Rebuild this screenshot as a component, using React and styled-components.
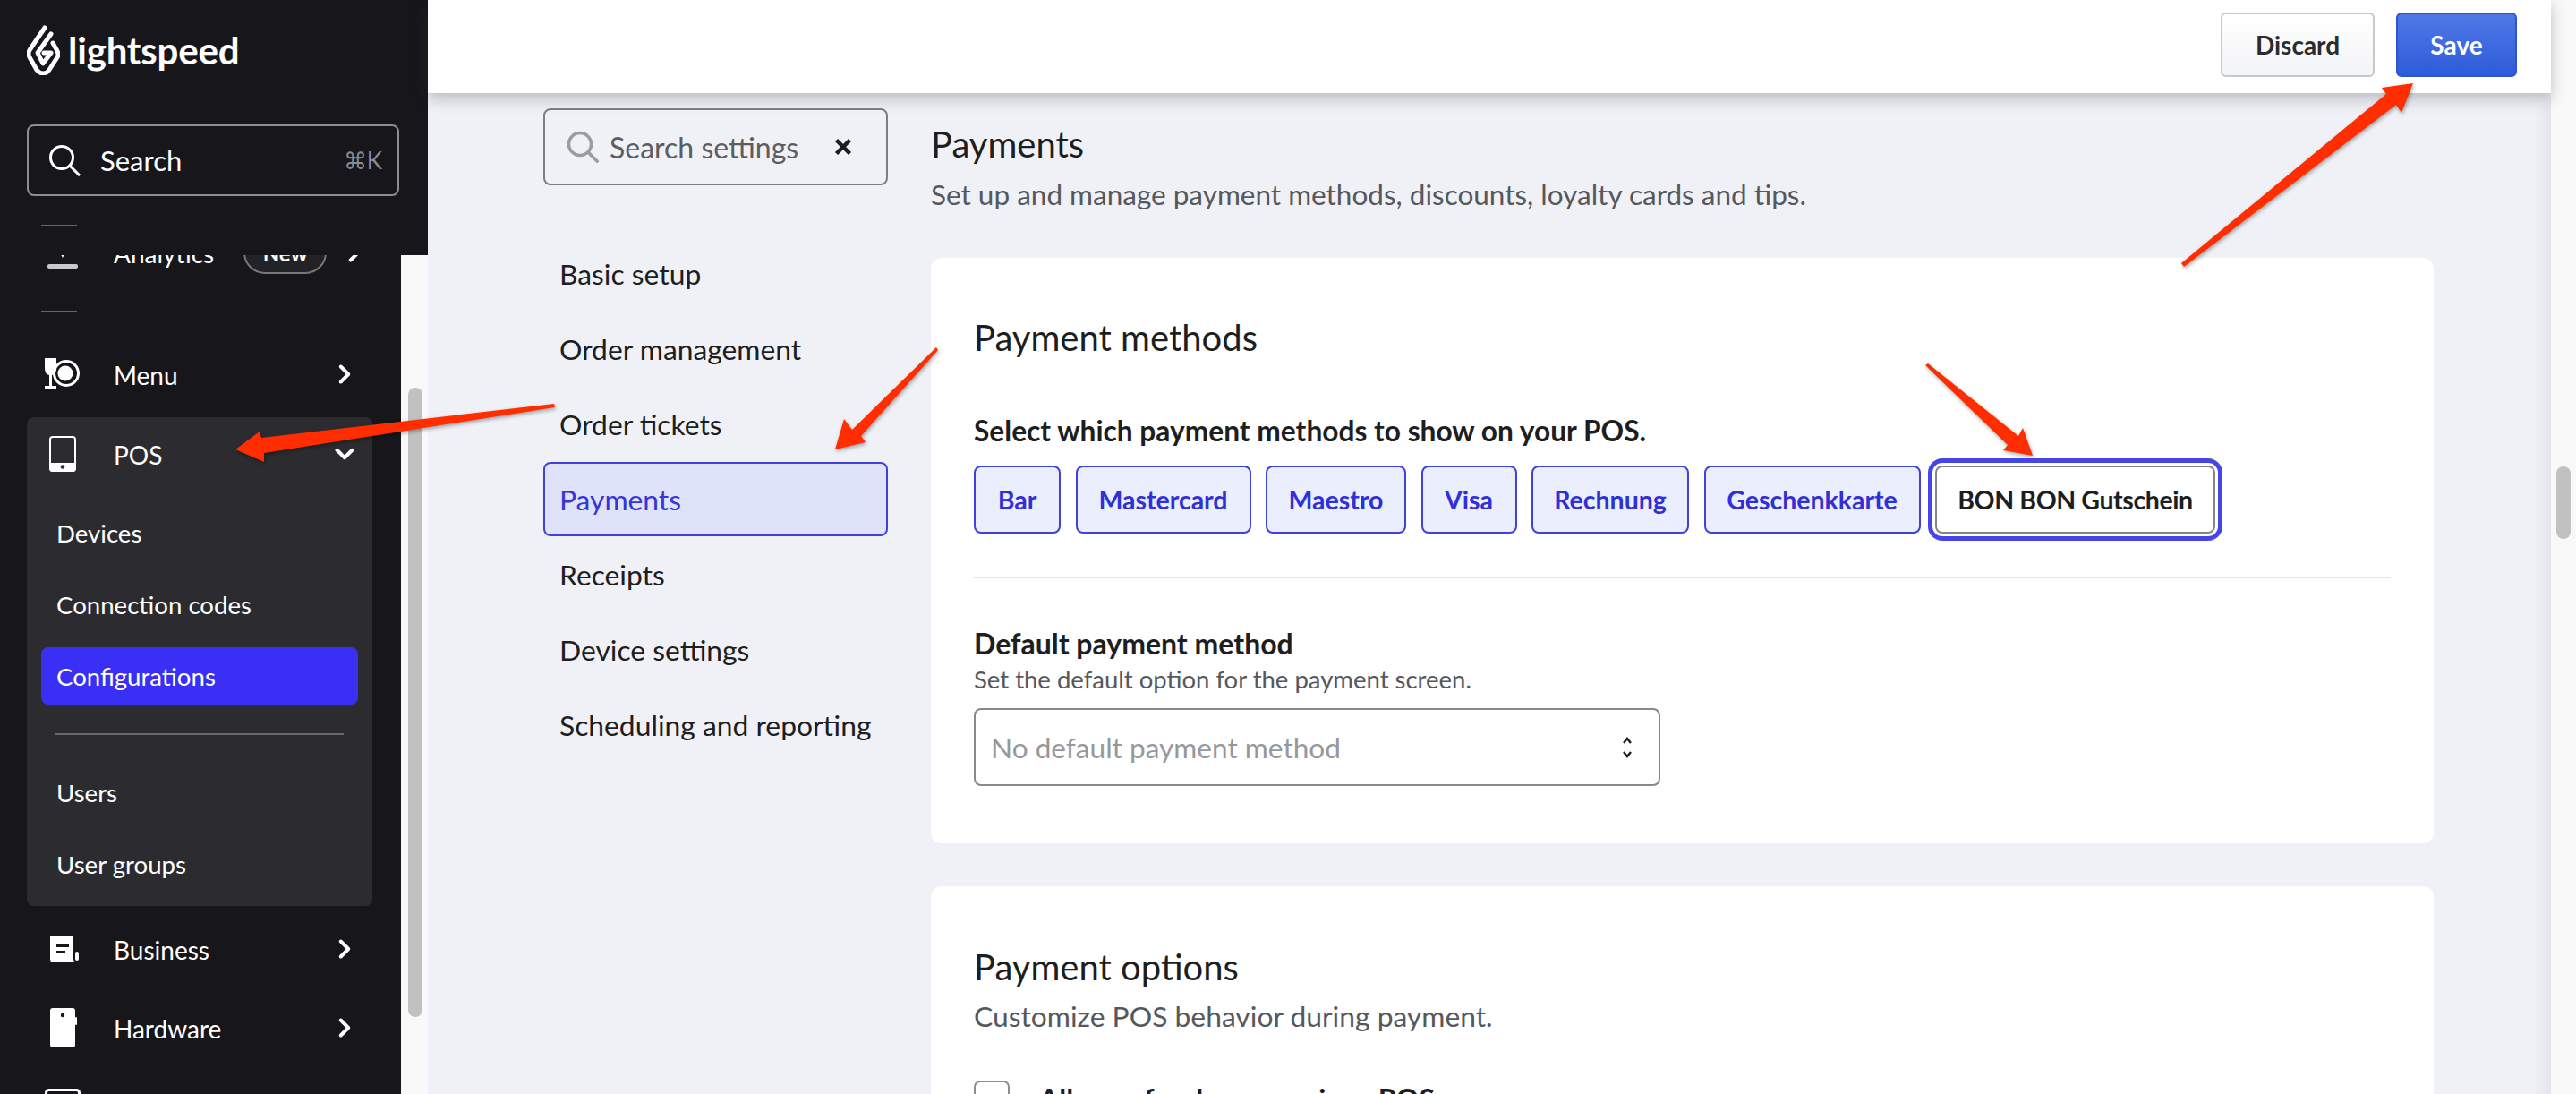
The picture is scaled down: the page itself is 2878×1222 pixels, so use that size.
import React from "react";
import styled, { createGlobalStyle } from "styled-components";
import { ChevronRight, ChevronDown } from "lucide-react";

const GlobalStyle = createGlobalStyle`
  html, body {
    margin: 0;
    width: 2878px;
    height: 1222px;
    overflow: hidden;
    background: #f0f1f6;
    font-family: "Lato", "Liberation Sans", sans-serif;
  }
  * {
    box-sizing: border-box;
  }
`;

const methods = [
  { name: "Bar", width: 97 },
  { name: "Mastercard", width: 196 },
  { name: "Maestro", width: 157 },
  { name: "Visa", width: 107 },
  { name: "Rechnung", width: 176 },
  { name: "Geschenkkarte", width: 242 },
];
const settingsLinks = [
  "Basic setup",
  "Order management",
  "Order tickets",
  "Payments",
  "Receipts",
  "Device settings",
  "Scheduling and reporting",
];

function Flame() {
  return (
    <svg width="37" height="56" viewBox="0 0 37 56" fill="none" stroke="#fff" strokeWidth="5" strokeLinejoin="round" strokeLinecap="round">
      <path d="M20 3 L3 28 Q1 32 3 36 L11 50 Q14 54 18 54 Q23 54 25 50 L34 36 Q36 33 34 29 L29 20" />
      <path d="M27 10 L12 31 L18 43 L27 31 L19 31" />
    </svg>
  );
}

function SearchGlass({ size, color, width }) {
  return (
    <svg width={size} height={size} viewBox="0 0 36 36" fill="none" stroke={color} strokeWidth={width} strokeLinecap="square">
      <circle cx="15" cy="15" r="12.5" />
      <path d="M24.5 24.5 L34 34" />
    </svg>
  );
}

function AnalyticsIcon() {
  return (
    <svg width="40" height="48" viewBox="0 0 40 48" fill="#fff">
      <path d="M16 22h8l-4 8z" />
      <rect x="3" y="37" width="34" height="5" rx="2" fill="#c9c9cc" />
    </svg>
  );
}

function MenuIcon() {
  return (
    <svg width="40" height="36" viewBox="0 0 40 36" fill="#fff">
      <path d="M0 0h13v11q0 7-5 8v12h5v3H0v-3h5V19q-5-1-5-8z" />
      <circle cx="24" cy="17" r="13.5" fill="none" stroke="#fff" strokeWidth="3" />
      <circle cx="23" cy="17" r="8.5" />
    </svg>
  );
}

function TabletIcon() {
  return (
    <svg width="40" height="40" viewBox="0 0 40 40">
      <rect x="6" y="1" width="28" height="38" rx="3" fill="none" stroke="#fff" strokeWidth="2" />
      <path d="M5 30h30v6q0 4-4 4H9q-4 0-4-4z" fill="#fff" />
      <circle cx="20" cy="34.5" r="2.3" fill="#2c2c30" />
    </svg>
  );
}

function BusinessIcon() {
  return (
    <svg width="40" height="30" viewBox="0 0 40 30">
      <path d="M6 0h26v26q0 3 3 4H10q-4 0-4-4z" fill="#fff" />
      <rect x="13" y="10" width="14" height="3" fill="#17171b" />
      <rect x="13" y="17" width="10" height="3" fill="#17171b" />
      <rect x="34" y="18" width="4" height="10" rx="2" fill="#fff" />
    </svg>
  );
}

function HardwareIcon() {
  return (
    <svg width="40" height="44" viewBox="0 0 40 44">
      <rect x="6" y="0" width="28" height="44" rx="3" fill="#fff" />
      <rect x="34" y="10" width="2" height="9" rx="1" fill="#fff" />
      <circle cx="20" cy="8" r="2.2" fill="#17171b" />
    </svg>
  );
}

function ScreenIcon() {
  return (
    <svg width="40" height="40" viewBox="0 0 40 40" fill="none" stroke="#fff" strokeWidth="3">
      <rect x="1.5" y="1.5" width="37" height="30" rx="3" />
    </svg>
  );
}

function UpDown() {
  return (
    <svg width="12" height="26" viewBox="0 0 12 26" fill="none" stroke="#1d1e21" strokeWidth="2.4">
      <path d="M2 8 L6 3 L10 8" />
      <path d="M2 18 L6 23 L10 18" />
    </svg>
  );
}

function Arrows() {
  return (
    <ArrowLayer width="2878" height="1222" viewBox="0 0 2878 1222">
      <polygon points="263,502 290,482 292,489 619,451 620,455 295,506 295,516" />
      <polygon points="933,502 943,468 952,480 1046,388 1048,391 962,487 967,494" />
      <polygon points="2696,93 2661,98 2666,105 2437,294 2440,298 2677,117 2683,126" />
      <polygon points="2271,509 2260,478 2255,487 2154,406 2151,408 2243,497 2238,503" />
    </ArrowLayer>
  );
}

function App() {
  return (
    <Page>
      <GlobalStyle />
      <Sidebar>
        <SideHeader>
          <Logo>
            <Flame />
            <LogoText>lightspeed</LogoText>
          </Logo>
          <SideSearch>
            <SearchGlass size={36} color="#fff" width={3} />
            <SideSearchText>Search</SideSearchText>
            <Shortcut>⌘K</Shortcut>
          </SideSearch>
          <ShortRule />
        </SideHeader>
        <SideBody>
          <SideNav>
            <AnalyticsRow>
              <IconSlot><AnalyticsIcon /></IconSlot>
              <RowLabel>Analytics</RowLabel>
              <NewPill>New</NewPill>
              <ChevronRight size={34} strokeWidth={2.8} color="#fff" />
            </AnalyticsRow>
            <ShortRule $below />
            <NavRow $first>
              <IconSlot><MenuIcon /></IconSlot>
              <RowLabel>Menu</RowLabel>
              <RowChevron><ChevronRight size={34} strokeWidth={2.8} color="#fff" /></RowChevron>
            </NavRow>
            <PosPanel>
              <PosRow>
                <IconSlot><TabletIcon /></IconSlot>
                <RowLabel>POS</RowLabel>
                <RowChevron><ChevronDown size={34} strokeWidth={2.8} color="#fff" /></RowChevron>
              </PosRow>
              <SubList>
                <SubItem>Devices</SubItem>
                <SubItem>Connection codes</SubItem>
                <SubItem $active>Configurations</SubItem>
                <SubRule />
                <SubItem>Users</SubItem>
                <SubItem>User groups</SubItem>
              </SubList>
            </PosPanel>
            <NavRow $gap={24}>
              <IconSlot><BusinessIcon /></IconSlot>
              <RowLabel>Business</RowLabel>
              <RowChevron><ChevronRight size={34} strokeWidth={2.8} color="#fff" /></RowChevron>
            </NavRow>
            <NavRow $gap={40}>
              <IconSlot><HardwareIcon /></IconSlot>
              <RowLabel>Hardware</RowLabel>
              <RowChevron><ChevronRight size={34} strokeWidth={2.8} color="#fff" /></RowChevron>
            </NavRow>
            <NavRow $gap={40}>
              <IconSlot><ScreenIcon /></IconSlot>
            </NavRow>
          </SideNav>
          <SideGutter>
            <SideThumb />
          </SideGutter>
        </SideBody>
      </Sidebar>

      <Main>
        <TopBar>
          <DiscardButton>Discard</DiscardButton>
          <SaveButton>Save</SaveButton>
        </TopBar>
        <Content>
          <SettingsColumn>
            <SettingsSearch>
              <SearchGlass size={36} color="#9a9ca0" width={3.5} />
              <SettingsSearchText>Search settings</SettingsSearchText>
              <ClearMark viewBox="0 0 20 20" width="20" height="20">
                <path d="M2.5 2.5 L17.5 17.5 M17.5 2.5 L2.5 17.5" />
              </ClearMark>
            </SettingsSearch>
            <SettingsNav>
              {settingsLinks.map((link) => (
                <SettingsLink key={link} $active={link === "Payments"}>
                  {link}
                </SettingsLink>
              ))}
            </SettingsNav>
          </SettingsColumn>
          <Panel>
            <PageTitle>Payments</PageTitle>
            <PageSub>Set up and manage payment methods, discounts, loyalty cards and tips.</PageSub>
            <Card>
              <CardTitle>Payment methods</CardTitle>
              <GroupLabel>Select which payment methods to show on your POS.</GroupLabel>
              <Methods>
                {methods.map((method) => (
                  <MethodButton key={method.name} $width={method.width}>
                    {method.name}
                  </MethodButton>
                ))}
                <MethodButton $width={313} $focused>BON BON Gutschein</MethodButton>
              </Methods>
              <CardRule />
              <FieldLabel>Default payment method</FieldLabel>
              <FieldHelp>Set the default option for the payment screen.</FieldHelp>
              <SelectBox>
                <span>No default payment method</span>
                <UpDown />
              </SelectBox>
            </Card>
            <SecondCard>
              <CardTitle>Payment options</CardTitle>
              <CardSub>Customize POS behavior during payment.</CardSub>
              <CheckRow>
                <CheckBox />
                <CheckLabel>Allow refunds on previous POS</CheckLabel>
              </CheckRow>
            </SecondCard>
          </Panel>
        </Content>
      </Main>

      <PageGutter>
        <PageThumb />
      </PageGutter>
      <Arrows />
    </Page>
  );
}

const Page = styled.div`
  position: relative;
  display: flex;
  width: 2878px;
  height: 1222px;
  overflow: hidden;
  background: #f0f1f6;
`;
const Sidebar = styled.aside`
  display: flex;
  flex-direction: column;
  flex: none;
  width: 478px;
  height: 100%;
`;
const SideHeader = styled.div`
  flex: none;
  height: 285px;
  padding: 28px 0 0 30px;
  background: #17171b;
`;
const Logo = styled.div`
  display: flex;
  align-items: flex-start;
  gap: 9px;
  height: 56px;
`;
const LogoText = styled.span`
  margin-top: 3px;
  font-size: 42px;
  line-height: 50px;
  font-weight: 700;
  color: #fff;
  letter-spacing: -0.2px;
`;
const SideSearch = styled.div`
  display: flex;
  align-items: center;
  width: 416px;
  height: 80px;
  margin-top: 55px;
  padding: 0 17px 0 22px;
  border: 2px solid #8e8e92;
  border-radius: 8px;
`;
const SideSearchText = styled.span`
  margin-left: 22px;
  font-size: 31px;
  color: #fff;
`;
const Shortcut = styled.span`
  margin-left: auto;
  font-size: 26px;
  color: #8a8a8e;
`;
const ShortRule = styled.div`
  width: 40px;
  height: 2px;
  margin: ${(p) => (p.$below ? "41px 0 0 46px" : "32px 0 0 16px")};
  background: #66666a;
`;
const SideBody = styled.div`
  display: flex;
  flex: 1;
  min-height: 0;
`;
const SideNav = styled.nav`
  flex: none;
  width: 448px;
  height: 100%;
  overflow: hidden;
  background: #17171b;
  color: #fff;
`;
const NavRow = styled.div`
  display: flex;
  align-items: center;
  height: 48px;
  margin-top: ${(p) => (p.$first ? 45 : p.$gap || 0)}px;
  padding: 0 46px 0 50px;
`;
const AnalyticsRow = styled(NavRow)`
  margin-top: -27px;
  padding-right: 0;
`;
const PosRow = styled(NavRow)`
  margin-top: 0;
  padding: 0 14px 0 20px;
`;
const IconSlot = styled.span`
  display: flex;
  flex: none;
  justify-content: center;
  width: 40px;
  margin-right: 37px;
`;
const RowLabel = styled.span`
  padding-top: 2px;
  font-size: 28px;
  line-height: 48px;
  color: #fff;
`;
const RowChevron = styled.span`
  display: flex;
  margin-left: auto;
`;
const NewPill = styled.span`
  display: flex;
  flex: none;
  align-items: center;
  justify-content: center;
  width: 93px;
  height: 48px;
  margin: 0 14px 0 33px;
  border: 2px solid #77777b;
  border-radius: 24px;
  background: #232327;
  font-size: 24px;
  font-weight: 700;
  color: #fff;
`;
const PosPanel = styled.div`
  width: 386px;
  height: 546px;
  margin: 24px 0 0 30px;
  padding-top: 17px;
  border-radius: 8px;
  background: #2c2c30;
`;
const SubList = styled.div`
  display: flex;
  flex-direction: column;
  gap: 16px;
  margin-top: 32px;
  padding: 0 16px;
`;
const SubItem = styled.div`
  display: flex;
  align-items: center;
  height: 64px;
  padding-left: 17px;
  border-radius: 8px;
  background: ${(p) => (p.$active ? "#3a2ff5" : "transparent")};
  font-size: 27.6px;
  color: #fff;
`;
const SubRule = styled.div`
  height: 2px;
  margin: 16px 16px;
  background: #6b6b6f;
`;
const SideGutter = styled.div`
  flex: none;
  width: 30px;
  height: 100%;
  padding: 148px 6px 0 8px;
  background: #f9f9f9;
`;
const SideThumb = styled.div`
  width: 16px;
  height: 703px;
  border-radius: 8px;
  background: #c1c1c1;
`;
const Main = styled.main`
  display: flex;
  flex-direction: column;
  flex: none;
  width: 2372px;
  height: 100%;
  background: linear-gradient(to right, #f0f1f6 0, #f0f1f6 2352px, #e5e6ea 100%);
`;
const TopBar = styled.header`
  position: relative;
  display: flex;
  flex: none;
  justify-content: flex-end;
  gap: 24px;
  height: 104px;
  padding: 14px 38px 0 0;
  background: #fff;
  box-shadow: 0 6px 16px rgba(40, 45, 60, 0.28);
`;
const BarButton = styled.button`
  height: 72px;
  border-radius: 6px;
  font-family: inherit;
  font-size: 28px;
  font-weight: 700;
`;
const DiscardButton = styled(BarButton)`
  width: 172px;
  border: 2px solid #c5c8cc;
  background: linear-gradient(#ffffff, #f3f4f6);
  color: #2b2c30;
`;
const SaveButton = styled(BarButton)`
  width: 135px;
  border: 2px solid #2c56d0;
  background: linear-gradient(#5079e7, #2e5bd9);
  color: #fff;
`;
const Content = styled.div`
  display: flex;
  gap: 48px;
  padding: 17px 0 0 129px;
`;
const SettingsColumn = styled.div`
  flex: none;
  width: 385px;
`;
const SettingsSearch = styled.div`
  display: flex;
  align-items: center;
  height: 86px;
  padding: 0 38px 0 24px;
  border: 2px solid #7c7f85;
  border-radius: 8px;
`;
const SettingsSearchText = styled.span`
  margin-left: 12px;
  font-size: 32px;
  color: #5a5d62;
`;
const ClearMark = styled.svg`
  margin-left: auto;
  fill: none;
  stroke: #1c1d20;
  stroke-width: 4.5;
`;
const SettingsNav = styled.div`
  display: flex;
  flex-direction: column;
  gap: 1px;
  margin-top: 57px;
`;
const SettingsLink = styled.a`
  display: flex;
  align-items: center;
  height: 83px;
  padding-left: 16px;
  border: 2px solid ${(p) => (p.$active ? "#4040dd" : "transparent")};
  border-radius: 8px;
  background: ${(p) => (p.$active ? "#dfe3f9" : "transparent")};
  font-size: 31.8px;
  color: ${(p) => (p.$active ? "#3535d8" : "#1d1e21")};
`;
const Panel = styled.div`
  flex: none;
  width: 1679px;
`;
const PageTitle = styled.h1`
  margin: 16px 0 0;
  font-size: 40px;
  line-height: 48px;
  font-weight: 400;
  color: #1d1e21;
`;
const PageSub = styled.p`
  margin: 12px 0 0;
  font-size: 31.5px;
  line-height: 40px;
  color: #55585d;
`;
const Card = styled.section`
  height: 654px;
  margin-top: 51px;
  padding: 65px 48px 0;
  border-radius: 12px;
  background: #fff;
`;
const SecondCard = styled(Card)`
  height: 400px;
  margin-top: 48px;
  padding-top: 66px;
`;
const CardTitle = styled.h2`
  margin: 0;
  font-size: 40px;
  line-height: 48px;
  font-weight: 400;
  color: #1d1e21;
`;
const GroupLabel = styled.div`
  margin-top: 62px;
  font-size: 31.7px;
  line-height: 36px;
  font-weight: 700;
  color: #1d1e21;
`;
const Methods = styled.div`
  display: flex;
  gap: 16.5px;
  margin-top: 21px;
`;
const MethodButton = styled.button`
  width: ${(p) => p.$width}px;
  height: 76px;
  padding: 0;
  border: 2px solid ${(p) => (p.$focused ? "#858585" : "#4040dd")};
  border-radius: 8px;
  background: ${(p) => (p.$focused ? "#fff" : "#eaeefd")};
  box-shadow: ${(p) => (p.$focused ? "0 0 0 3px #fff, 0 0 0 8px #4646e8" : "none")};
  font-family: inherit;
  font-size: 28.5px;
  font-weight: 700;
  letter-spacing: ${(p) => (p.$focused ? "-0.4px" : "0")};
  color: ${(p) => (p.$focused ? "#1d1e21" : "#3030d8")};
`;
const CardRule = styled.div`
  height: 2px;
  margin-top: 48px;
  background: #e5e5e5;
`;
const FieldLabel = styled.div`
  margin-top: 55px;
  font-size: 32px;
  line-height: 36px;
  font-weight: 700;
  color: #1d1e21;
`;
const FieldHelp = styled.div`
  margin-top: 7px;
  font-size: 27.5px;
  line-height: 30px;
  color: #55585d;
`;
const SelectBox = styled.div`
  display: flex;
  align-items: center;
  justify-content: space-between;
  width: 767px;
  height: 87px;
  margin-top: 17px;
  padding: 0 29px 0 17px;
  border: 2px solid #85888c;
  border-radius: 8px;
  font-size: 31.6px;
  color: #96989c;
`;
const CardSub = styled.p`
  margin: 11px 0 0;
  font-size: 31.8px;
  line-height: 40px;
  color: #55585d;
`;
const CheckRow = styled.div`
  display: flex;
  align-items: center;
  gap: 33px;
  margin-top: 52px;
`;
const CheckBox = styled.span`
  flex: none;
  width: 40px;
  height: 40px;
  border: 2px solid #8a8d91;
  border-radius: 7px;
`;
const CheckLabel = styled.span`
  font-size: 32px;
  font-weight: 700;
  color: #1d1e21;
`;
const PageGutter = styled.div`
  flex: none;
  width: 28px;
  height: 100%;
  padding: 521px 6px 0 6px;
  background: #f9f9f9;
`;
const PageThumb = styled.div`
  width: 16px;
  height: 81px;
  border-radius: 8px;
  background: #c1c1c1;
`;
const ArrowLayer = styled.svg`
  position: absolute;
  top: 0;
  left: 0;
  pointer-events: none;
  fill: #ff2d00;
  filter: drop-shadow(1px 2px 2px rgba(0, 0, 0, 0.35));
`;

export default App;
